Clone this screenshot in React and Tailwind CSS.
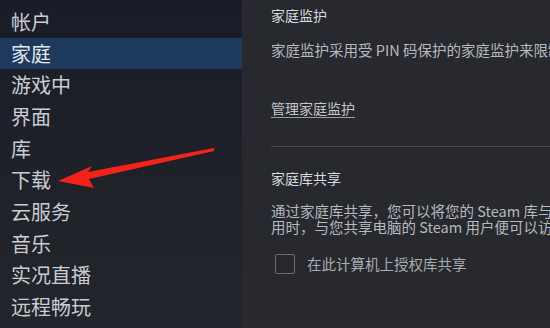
import React from "react";

const items = ["帐户", "家庭", "游戏中", "界面", "库", "下载", "云服务", "音乐", "实况直播", "远程畅玩"];

export default function App() {
  return (
    <div
      className="relative flex w-[550px] h-[328px] overflow-hidden bg-[#27292e]"
      style={{ fontFamily: '"Noto Sans CJK SC", "Noto Sans", sans-serif' }}
    >
      <div className="w-[242px] shrink-0 flex flex-col pt-[6px] bg-gradient-to-b from-[#1a1d28] via-[#1f2129] to-[#22252b]">
        {items.map((t) => (
          <div
            key={t}
            className={
              "h-[31.7px] flex items-center pl-[11px] text-[20px] leading-none " +
              (t === "家庭" ? "bg-[#1d3a5d] text-[#e4e8ee]" : "text-[#c9ccd1]")
            }
          >
            {t}
          </div>
        ))}
      </div>
      <div className="flex-1 min-w-0 flex flex-col pl-[29px] pt-[6px] text-[#b6b9be] text-[14.5px] whitespace-nowrap overflow-hidden">
        <div className="text-[#d6d9de] text-[14px] h-[18px] leading-[18px]">家庭监护</div>
        <div className="mt-[17px] h-[18px] leading-[18px]">家庭监护采用受 PIN 码保护的家庭监护来限制</div>
        <div className="mt-[40px] h-[18px] leading-[18px] text-[14px] text-[#c2c5ca] underline underline-offset-[3px] decoration-[#9a9da2]">管理家庭监护</div>
        <div className="mt-[29px] h-px bg-[#4a4d53]" />
        <div className="mt-[22px] h-[18px] text-[14px] text-[#d6d9de] leading-[18px]">家庭库共享</div>
        <div className="mt-[16px] leading-[16px]">
          <div>通过家庭库共享，您可以将您的 Steam 库与</div>
          <div>用时，与您共享电脑的 Steam 用户便可以访</div>
        </div>
        <div className="mt-[18px] flex items-center">
          <div className="w-[20px] h-[20px] ml-[4px] shrink-0 border border-[#6a6d72] rounded-[2px]" />
          <span className="ml-[12px] text-[#a9acb1]">在此计算机上授权库共享</span>
        </div>
      </div>
      <svg className="absolute left-0 top-0" width="550" height="328" viewBox="0 0 550 328">
        <path
          d="M214 148 L88 172 L92 166 L58 181 L94 188 L89 179 L214 151 Z"
          fill="#f5221b"
        />
      </svg>
    </div>
  );
}
